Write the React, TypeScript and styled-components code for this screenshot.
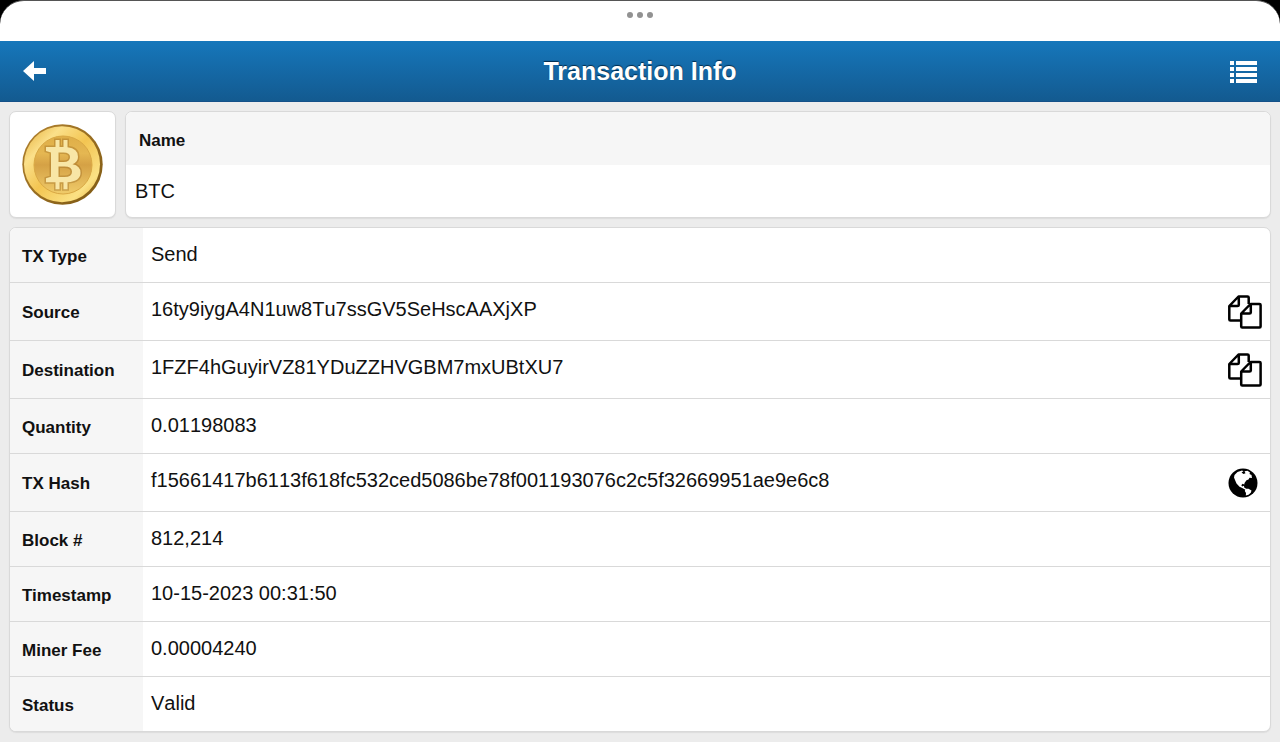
import React from "react";
import styled, { createGlobalStyle } from "styled-components";

const GlobalStyle = createGlobalStyle`
  *, *::before, *::after { box-sizing: border-box; }
  body {
    margin: 0;
    background: #ececec;
    color: #111;
    font-family: "Liberation Sans", Arial, Helvetica, sans-serif;
  }
`;

const WindowTop = styled.div`
  height: 41px;
  background: #000;
`;

const Grabber = styled.div`
  display: flex;
  justify-content: center;
  gap: 4px;
  height: 100%;
  padding-top: 11px;
  background: #fff;
  border-top: 1px solid #555;
  border-radius: 24px 24px 0 0;
`;

const Dot = styled.span`
  width: 6px;
  height: 6px;
  border-radius: 50%;
  background: #929292;
`;

const Header = styled.header`
  display: grid;
  grid-template-columns: 80px 1fr 80px;
  align-items: center;
  height: 61px;
  background: linear-gradient(#1677bb, #135a90);
  border-bottom: 1px solid #145088;
  color: #fff;
`;

const Title = styled.h1`
  margin: 0;
  font-size: 25px;
  line-height: 30px;
  text-align: center;
  text-shadow: 0 -1px 1px #032c4c;
`;

const IconButton = styled.button<{ $align?: "left" | "right" }>`
  display: flex;
  justify-content: ${(p) => (p.$align === "left" ? "flex-start" : "flex-end")};
  width: 100%;
  padding: 0 23px 0 22px;
  border: 0;
  background: none;
  color: inherit;
  cursor: pointer;
`;

const Content = styled.main`
  display: flex;
  flex-direction: column;
  gap: 9px;
  padding: 9px;
`;

const Summary = styled.section`
  display: flex;
  gap: 9px;
`;

const Card = styled.div`
  overflow: hidden;
  background: #fff;
  border: 1px solid #d9d9d9;
  border-radius: 7px;
  box-shadow: 0 1px 1px #ddd;
`;

const CoinCard = styled(Card)`
  display: flex;
  align-items: center;
  justify-content: center;
  flex: none;
  width: 107px;
  height: 107px;
`;

const NameCard = styled(Card)`
  flex: 1;
`;

const NameLabel = styled.div`
  padding: 19px 13px 14px;
  background: #f6f6f6;
  font-size: 17px;
  font-weight: bold;
  line-height: 20px;
`;

const NameValue = styled.div`
  padding: 14px 9px;
  font-size: 20px;
  line-height: 24px;
`;

const Details = styled.table`
  width: 100%;
  border-collapse: separate;
  border-spacing: 0;
  table-layout: fixed;
`;

const Label = styled.th`
  width: 133px;
  padding: 3px 0 0 12px;
  background: #f6f6f6;
  font-size: 17px;
  line-height: 20px;
  text-align: left;
`;

const Value = styled.td<{ $raised?: boolean }>`
  padding: 0 0 ${(p) => (p.$raised ? 6 : 2)}px 8px;
  font-size: 20px;
  line-height: 24px;
  font-kerning: none;
`;

const Row = styled.tr<{ $tall?: boolean }>`
  height: ${(p) => (p.$tall ? 58 : 55)}px;

  &:last-child { height: 54px; }
  &:not(:last-child) > * { border-bottom: 1px solid #d9d9d9; }
`;

const Action = styled.td`
  width: 60px;
  padding: 0;
`;

const RowButton = styled(IconButton)<{ $inset: number }>`
  padding: 0 ${(p) => p.$inset}px 0 0;
`;

const BackIcon = () => (
  <svg width="24" height="22" viewBox="0 0 24 22" aria-hidden="true">
    <path d="M1 11 12 1v7h12v6H12v7Z" fill="#fff" />
  </svg>
);

const ListIcon = () => (
  <svg width="28" height="24" viewBox="0 0 28 24" fill="#fff" aria-hidden="true">
    {[2, 8, 14, 20].map((y) => (
      <path key={y} d={`M1 ${y}h4v4H1zM7 ${y}h21v4H7z`} />
    ))}
  </svg>
);

const CopyIcon = () => (
  <svg width="34" height="34" viewBox="0 0 34 34" fill="none" stroke="#000" strokeWidth="2.5" strokeLinejoin="round" aria-hidden="true">
    <path d="M13 25.500H2.500Q1.300 25.500 1.300 24.500V11L10.500 1.500H19.500Q20.700 1.500 20.700 2.500V9M1.300 11H9.500Q10.800 11 10.800 10V1.500" />
    <path d="M13.200 18.500 22.500 9H31.500Q32.600 9 32.600 10V31.500Q32.600 32.600 31.500 32.600H14.200Q13.200 32.600 13.200 31.500ZM13.200 18.500H21.500Q22.800 18.500 22.800 17.500V9" />
  </svg>
);

const GlobeIcon = () => (
  <svg width="30" height="30" viewBox="0 0 30 30" aria-hidden="true">
    <circle cx="15" cy="15" r="14.500" fill="#000" />
    <path
      fill="#fff"
      d="M6.500 7 9.500 4 14 2.600 15.500 3.200 13.500 4.600 15.500 6 17.500 5.200 16.500 3.200 19.500 2.800 22 4.500 21.500 6 23.500 7 24 10 21.500 9.800 20.500 11.500 18.500 12.200 16.500 15 16.300 16.500 14.500 15.800 13.300 17.200 14.200 18.600 16 17.800 16.200 19.500 18.200 20.800 17 21.400 14.200 20 11.500 18.800 8.500 15.500 7 12 6 9.500ZM17.500 20.800 20.500 20.800 23.500 22.600 22.800 24.800 20.500 26.800 17.800 27.600 18 25 16.800 23Z"
    />
  </svg>
);

const signPath =
  "M24 23h9.500v-7h4v7h4v-7h4v7.300q10.500 1 10.500 9.500 0 5.500-5.500 7.500 8 1.500 8 8.500 0 8.500-13 9.500v7h-4v-7h-4v7h-4v-7H24v-4l5-1.500V28.500l-5-1.500ZM36.500 28.500v9.500h5q6.500 0 6.500-5 0-4.500-6.500-4.500ZM36.500 42.500v10.500h6q7.500 0 7.500-5.300 0-5.200-7.500-5.200Z";

const CoinIcon = () => (
  <svg width="82" height="82" viewBox="0 0 82 82" role="img" aria-label="Bitcoin">
    <defs>
      <linearGradient id="rim" x1="0" y1="0" x2="1" y2="1">
        <stop offset="0" stopColor="#e3aa35" />
        <stop offset=".25" stopColor="#fbe08a" />
        <stop offset=".5" stopColor="#f3c552" />
        <stop offset=".8" stopColor="#fbe184" />
        <stop offset="1" stopColor="#e6aa30" />
      </linearGradient>
      <linearGradient id="edge" x1="0" y1="0" x2="1" y2="1">
        <stop offset="0" stopColor="#b38330" />
        <stop offset="1" stopColor="#7d5812" />
      </linearGradient>
      <linearGradient id="face" x1="0" y1="0" x2="0" y2="1">
        <stop offset="0" stopColor="#dfae48" />
        <stop offset=".3" stopColor="#e5b752" />
        <stop offset=".5" stopColor="#d5a145" />
        <stop offset="1" stopColor="#f0cc6a" />
      </linearGradient>
    </defs>
    <circle cx="40.500" cy="40.500" r="40.200" fill="url(#edge)" />
    <circle cx="40" cy="40.200" r="38" fill="url(#rim)" />
    <circle cx="41" cy="41" r="29" fill="url(#face)" stroke="#d9a844" strokeWidth="1" />
    <path d={signPath} fill="none" stroke="#9a6a20" strokeWidth="3" opacity=".4" />
    <path d={signPath} fill="#f8e6a6" fillRule="evenodd" />
  </svg>
);

type Detail = { label: string; value: string; action?: "copy" | "browse" };

const details: Detail[] = [
  { label: "TX Type", value: "Send" },
  { label: "Source", value: "16ty9iygA4N1uw8Tu7ssGV5SeHscAAXjXP", action: "copy" },
  { label: "Destination", value: "1FZF4hGuyirVZ81YDuZZHVGBM7mxUBtXU7", action: "copy" },
  { label: "Quantity", value: "0.01198083" },
  { label: "TX Hash", value: "f15661417b6113f618fc532ced5086be78f001193076c2c5f32669951ae9e6c8", action: "browse" },
  { label: "Block #", value: "812,214" },
  { label: "Timestamp", value: "10-15-2023 00:31:50" },
  { label: "Miner Fee", value: "0.00004240" },
  { label: "Status", value: "Valid" },
];

export default function App() {
  return (
    <>
      <GlobalStyle />
      <WindowTop>
        <Grabber>
          <Dot />
          <Dot />
          <Dot />
        </Grabber>
      </WindowTop>
      <Header>
        <IconButton $align="left" aria-label="Back">
          <BackIcon />
        </IconButton>
        <Title>Transaction Info</Title>
        <IconButton $align="right" aria-label="Menu">
          <ListIcon />
        </IconButton>
      </Header>
      <Content>
        <Summary>
          <CoinCard>
            <CoinIcon />
          </CoinCard>
          <NameCard>
            <NameLabel>Name</NameLabel>
            <NameValue>BTC</NameValue>
          </NameCard>
        </Summary>
        <Card>
          <Details>
            <tbody>
              {details.map(({ label, value, action }) => (
                <Row key={label} $tall={!!action}>
                  <Label scope="row">{label}</Label>
                  <Value colSpan={action ? 1 : 2} $raised={!!action}>
                    {value}
                  </Value>
                  {action && (
                    <Action>
                      <RowButton
                        $inset={action === "copy" ? 8 : 12}
                        aria-label={action === "copy" ? `Copy ${label}` : `View ${label}`}
                      >
                        {action === "copy" ? <CopyIcon /> : <GlobeIcon />}
                      </RowButton>
                    </Action>
                  )}
                </Row>
              ))}
            </tbody>
          </Details>
        </Card>
      </Content>
    </>
  );
}
